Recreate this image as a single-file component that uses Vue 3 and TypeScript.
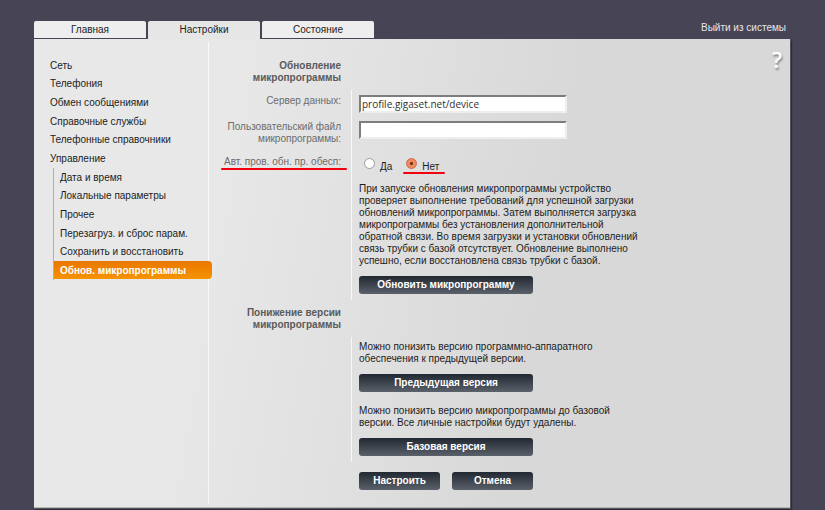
<script setup lang="ts">
import { ref } from 'vue'

const tabs = ['Главная', 'Настройки', 'Состояние']
const activeTab = ref('Настройки')

const sections = ['Сеть', 'Телефония', 'Обмен сообщениями', 'Справочные службы', 'Телефонные справочники', 'Управление']
const management = ['Дата и время', 'Локальные параметры', 'Прочее', 'Перезагруз. и сброс парам.', 'Сохранить и восстановить', 'Обнов. микропрограммы']
const activePage = ref('Обнов. микропрограммы')

const dataServer = ref('profile.gigaset.net/device')
const userFile = ref('')
const autoCheck = ref<'yes' | 'no'>('no')
</script>

<template>
  <div class="shell">
    <header class="top">
      <nav class="tabs">
        <a v-for="tab in tabs" :key="tab" href="#" class="tab" :class="{ active: tab === activeTab }" @click.prevent="activeTab = tab">{{ tab }}</a>
      </nav>
      <a href="#" class="logout">Выйти из системы</a>
    </header>

    <div class="panel">
      <nav class="side">
        <ul class="menu">
          <li v-for="item in sections" :key="item"><a href="#">{{ item }}</a></li>
        </ul>
        <ul class="menu submenu">
          <li v-for="item in management" :key="item">
            <a href="#" :class="{ current: item === activePage }" @click.prevent="activePage = item">{{ item }}</a>
          </li>
        </ul>
      </nav>

      <form class="content" @submit.prevent>
        <h2>Обновление микропрограммы</h2>
        <div class="row">
          <label class="caption" for="server">Сервер данных:</label>
          <div class="field"><input id="server" v-model="dataServer" class="text" type="text"></div>
        </div>
        <div class="row tall">
          <label class="caption" for="file">Пользовательский файл микропрограммы:</label>
          <div class="field"><input id="file" v-model="userFile" class="text" type="text"></div>
        </div>
        <div class="row last" role="radiogroup" aria-labelledby="auto">
          <div class="caption"><span id="auto" class="marked">Авт. пров. обн. пр. обесп:</span></div>
          <div class="field">
            <div class="radios">
              <label><input v-model="autoCheck" type="radio" name="auto" value="yes"><span>Да</span></label>
              <label class="marked"><input v-model="autoCheck" type="radio" name="auto" value="no"><span>Нет</span></label>
            </div>
            <p class="intro">При запуске обновления микропрограммы устройство проверяет выполнение требований для успешной загрузки обновлений микропрограммы. Затем выполняется загрузка микропрограммы без установления дополнительной обратной связи. Во время загрузки и установки обновлений связь трубки с базой отсутствует. Обновление выполнено успешно, если восстановлена связь трубки с базой.</p>
            <button type="button" class="wide">Обновить микропрограмму</button>
          </div>
        </div>

        <h2>Понижение версии микропрограммы</h2>
        <div class="row downgrade">
          <div class="caption"></div>
          <div class="field">
            <p>Можно понизить версию программно-аппаратного обеспечения к предыдущей версии.</p>
            <button type="button" class="wide">Предыдущая версия</button>
            <p class="next">Можно понизить версию микропрограммы до базовой версии. Все личные настройки будут удалены.</p>
            <button type="button" class="wide">Базовая версия</button>
          </div>
        </div>

        <div class="actions">
          <button type="submit">Настроить</button>
          <button type="reset">Отмена</button>
        </div>
      </form>
      <a href="#" class="help">?</a>
    </div>
  </div>
</template>

<style>
body {
  background: #464455;
}
</style>

<style scoped>
.shell {
  padding: 21px 35px 2px 34px;
  font: 10px/12px "Liberation Sans", Arial, sans-serif;
  color: #1c1c1c;
}
a {
  color: inherit;
  text-decoration: none;
}
.top {
  display: flex;
  justify-content: space-between;
  height: 18px;
}
.tabs {
  display: flex;
  gap: 2px;
}
.tab {
  width: 112px;
  height: 17px;
  line-height: 18px;
  text-align: center;
  background: #eee;
  border-radius: 2px 2px 0 0;
}
.tab.active {
  height: 18px;
  background: #e6e6e6;
}
.logout {
  padding: 1px 4px 0 0;
  color: #e6e6ea;
}
.panel {
  display: grid;
  grid-template-columns: 175px minmax(0, 1fr) 40px;
  background: linear-gradient(100deg, #e8e8e8 24%, #d8d8d8 66%);
  border-bottom: 1px solid #b5b5b5;
  box-shadow: 1px 1px 0 #55555b, 2px 2px 1px #2b2a35;
}
.side {
  margin: 3px 0;
  padding-top: 14px;
  border-right: 1px solid #f8f8f8;
}
.menu {
  display: grid;
  grid-auto-rows: 1fr;
  height: 112px;
  margin: 0;
  padding: 0 0 0 16px;
  list-style: none;
}
.menu li {
  display: grid;
}
.menu a {
  display: flex;
  align-items: center;
  padding-top: 1px;
}
.submenu {
  position: relative;
  z-index: 1;
  margin: 0 -4px 0 19px;
  padding: 0;
  border-left: 1px solid #b0b0b0;
}
.submenu a {
  padding-left: 6px;
}
.submenu .current {
  box-sizing: border-box;
  height: 18px;
  font-weight: bold;
  color: #fff;
  background: linear-gradient(#ea7700, #f59300);
  border-radius: 0 4px 4px 0;
}
.content {
  padding: 21px 0 17px;
}
h2 {
  width: 110px;
  margin: 0 0 6px 22px;
  font-size: 10px;
  line-height: 12px;
  text-align: right;
  color: #5a5a5a;
}
.row {
  display: grid;
  grid-template-columns: 132px minmax(0, 1fr);
  column-gap: 10px;
}
.caption {
  padding-top: 5px;
  text-align: right;
  color: #6c6c6c;
}
.field {
  padding: 5px 0 0 7px;
  border-left: 1px solid #f8f8f8;
  min-height: 21px;
}
.tall .field {
  min-height: 29px;
}
.last {
  margin-bottom: 7px;
}
.last .caption {
  padding-top: 6px;
}
.last .field {
  padding-bottom: 6px;
}
.text {
  display: block;
  box-sizing: border-box;
  width: 208px;
  height: 18px;
  padding: 0 1px;
  border: 2px solid #eee;
  border-top-color: #7d7d7d;
  border-left-color: #7d7d7d;
  background: #fff;
  font: 10px/14px "Open Sans", "Noto Sans", sans-serif;
  color: #303030;
}
.radios {
  display: flex;
  gap: 14px;
  height: 17px;
  padding: 3px 0 0 5px;
}
.radios label {
  display: flex;
  gap: 5px;
}
.radios span {
  padding-top: 3px;
}
.radios input {
  appearance: none;
  box-sizing: border-box;
  width: 11px;
  height: 11px;
  margin: 0;
  border: 1px solid #999;
  border-radius: 50%;
  background: #fff;
}
.radios input:checked {
  border-color: #c66c47;
  background: radial-gradient(circle, #673019 0 1px, #f08a5d 2px);
}
.marked {
  position: relative;
}
.marked::after {
  content: "";
  position: absolute;
  left: -3px;
  right: -6px;
  bottom: -3px;
  height: 2px;
  border-radius: 1px;
  background: #f2000d;
}
.radios .marked::after {
  bottom: 1px;
}
p {
  max-width: 284px;
  margin: 0 0 9px;
}
.field .intro {
  margin-top: 8px;
}
.field .next {
  margin-top: 13px;
}
.downgrade .field {
  padding: 4px 0 6px 7px;
}
button {
  display: block;
  width: 81px;
  height: 18px;
  padding: 0;
  border: 0;
  border-radius: 3px;
  background: linear-gradient(#222831, #5b616b);
  font: bold 10px/18px "Liberation Sans", Arial, sans-serif;
  color: #fff;
}
.wide {
  width: 174px;
}
.actions {
  display: flex;
  gap: 12px;
  margin: 10px 0 0 150px;
}
.help {
  padding: 8px 8px 0 0;
  text-align: right;
  font: 600 22px/24px "Open Sans", "Noto Sans", sans-serif;
  color: #fff;
  text-shadow: 1px 2px 2px #888;
}
</style>
